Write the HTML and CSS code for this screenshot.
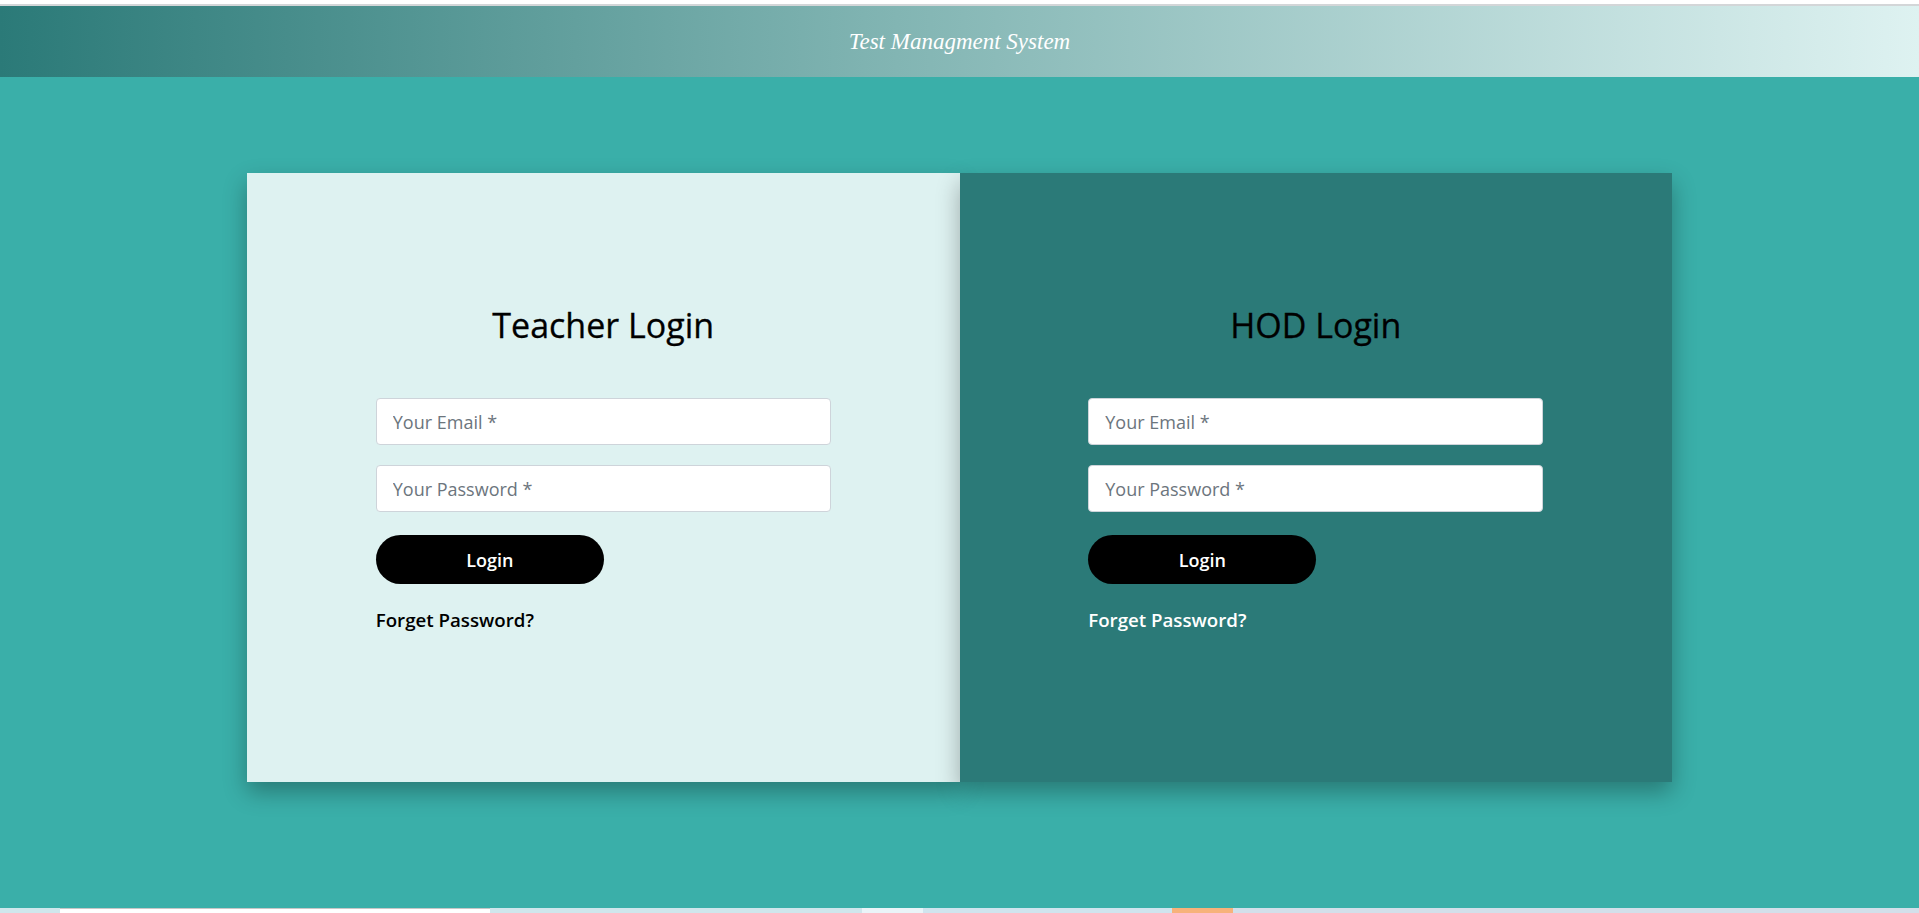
FILE: index.html
```html
<!DOCTYPE html>
<html lang="en">
<head>
<meta charset="utf-8">
<title>Test Managment System</title>
<link rel="stylesheet" href="styles.css">
</head>
<body>
<div class="topline"></div>
<header class="site-header">
  <h1 class="site-title">Test Managment System</h1>
</header>
<main class="main">
  <div class="login-pair">
    <section class="card card-teacher">
      <h2 class="card-title">Teacher Login</h2>
      <form class="login-form">
        <input class="field" type="email" placeholder="Your Email *">
        <input class="field" type="password" placeholder="Your Password *">
        <button class="btn-login" type="button">Login</button>
        <a class="forgot" href="#">Forget Password?</a>
      </form>
    </section>
    <section class="card card-hod">
      <h2 class="card-title">HOD Login</h2>
      <form class="login-form">
        <input class="field" type="email" placeholder="Your Email *">
        <input class="field" type="password" placeholder="Your Password *">
        <button class="btn-login" type="button">Login</button>
        <a class="forgot forgot-light" href="#">Forget Password?</a>
      </form>
    </section>
  </div>
</main>
<div class="bottom-strip">
  <span class="seg seg-a"></span>
  <span class="seg seg-white"></span>
  <span class="seg seg-b"></span>
  <span class="seg seg-light"></span>
  <span class="seg seg-c"></span>
  <span class="seg seg-orange"></span>
  <span class="seg seg-d"></span>
</div>
</body>
</html>
```
FILE: styles.css
```css
html, body {
  margin: 0;
  padding: 0;
}
body {
  min-height: 100vh;
  display: flex;
  flex-direction: column;
  background: #3AAFA9;
  font-family: "Open Sans", "Noto Sans", sans-serif;
  overflow: hidden;
}
.topline {
  height: 4px;
  background: #ffffff;
  border-bottom: 2px solid #d3d6d8;
}
.site-header {
  height: 71px;
  display: flex;
  align-items: center;
  justify-content: center;
  background: linear-gradient(to right, #2B7A78 0%, #7fb3b1 45%, #DEF2F1 100%);
}
.site-title {
  margin: 0;
  font-family: "Liberation Serif", "DejaVu Serif", serif;
  font-style: italic;
  font-weight: normal;
  font-size: 23px;
  color: #ffffff;
}
.main {
  flex: 1;
  padding-top: 96px;
}
.login-pair {
  width: 1425px;
  margin: 0 auto;
  display: flex;
}
.card {
  flex: 1;
  height: 609px;
  box-sizing: border-box;
  padding-top: 131px;
  display: flex;
  flex-direction: column;
  align-items: center;
  box-shadow: 0 10px 22px rgba(0, 0, 0, 0.3);
}
.card-teacher {
  background: #DEF2F1;
}
.card-hod {
  background: #2B7A78;
  position: relative;
  z-index: 1;
}
.card-title {
  margin: 0;
  font-size: 34px;
  font-weight: 500;
  line-height: 43px;
  color: #000000;
  -webkit-text-stroke: 0.3px #000000;
}
.login-form {
  width: 455px;
  margin-top: 51px;
  display: flex;
  flex-direction: column;
  align-items: flex-start;
}
.field {
  width: 100%;
  height: 47px;
  box-sizing: border-box;
  padding: 0 16px;
  border: 1px solid #ced4da;
  border-radius: 4px;
  background: #ffffff;
  font-family: inherit;
  font-size: 18px;
  color: #495057;
  margin-bottom: 20px;
}
.field::placeholder {
  color: #6c757d;
}
.field + .field {
  margin-bottom: 23px;
}
.btn-login {
  width: 228px;
  height: 49px;
  border: none;
  border-radius: 25px;
  background: #000000;
  color: #ffffff;
  font-family: inherit;
  font-size: 18px;
  font-weight: 600;
  cursor: pointer;
}
.forgot {
  margin-top: 22px;
  font-size: 18.7px;
  font-weight: 600;
  line-height: 27px;
  color: #000000;
  text-decoration: none;
}
.forgot-light {
  color: #ffffff;
}
.bottom-strip {
  height: 5px;
  display: flex;
}
.seg {
  display: block;
  height: 100%;
  box-sizing: border-box;
}
.seg-a { width: 60px; background: #cfe7ec; }
.seg-white { width: 430px; background: #ffffff; border-top: 1px solid #c7c7c7; }
.seg-b { width: 372px; background: #cfe6ec; }
.seg-light { width: 61px; background: #eaf4f8; }
.seg-c { width: 249px; background: #d0e4ee; }
.seg-orange { width: 61px; background: #f7b27a; }
.seg-d { flex: 1; background: #d3dfea; }
```
